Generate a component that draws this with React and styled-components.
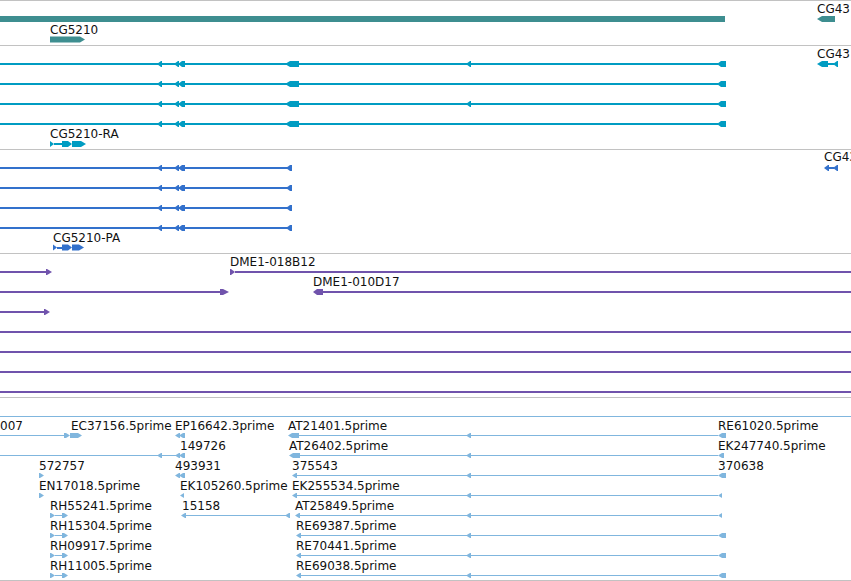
import React from 'react';
import styled, { createGlobalStyle } from 'styled-components';

const Global = createGlobalStyle`
  html, body { margin: 0; padding: 0; background: #ffffff; }
  body { font-family: "DejaVu Sans", "Liberation Sans", sans-serif; overflow: hidden; }
`;

const Browser = styled.main`
  width: 851px;
  height: 581px;
  display: flex;
  flex-direction: column;
  overflow: hidden;
  background: #ffffff;
`;

const Track = styled.section`
  flex: none;
  box-sizing: border-box;
  height: ${(p) => p.$height}px;
  border-top: 1px solid #c2c2c2;
  border-bottom: ${(p) => (p.$last ? '1px solid #c2c2c2' : 'none')};
  overflow: hidden;
  color: ${(p) => p.$color};
`;

const Canvas = styled.svg`
  display: block;
  width: 851px;
  height: 100%;
  overflow: hidden;
`;

const Stem = styled.rect`
  fill: currentColor;
  shape-rendering: crispEdges;
`;

const Exon = styled.polygon`
  fill: currentColor;
`;

const Label = styled.text`
  font-family: "DejaVu Sans", "Liberation Sans", sans-serif;
  font-size: 12px;
  fill: #111111;
`;

/* feature primitives */
const line = (x1, x2, y, t = 2) => ({ k: 'l', x1, x2, y, t });
const arrow = (x1, x2, y, dir = 'left', h = 6, head = 4) => ({ k: 'a', x1, x2, y, dir, h, head });
const text = (x, y, s) => ({ k: 't', x, y, s });

function Feature({ f }) {
  if (f.k === 'l') return <Stem x={f.x1} y={f.y - f.t / 2} width={f.x2 - f.x1} height={f.t} />;
  if (f.k === 't') return <Label x={f.x} y={f.y}>{f.s}</Label>;
  const top = f.y - f.h / 2;
  const bot = f.y + f.h / 2;
  const hd = Math.min(f.head, f.x2 - f.x1);
  const pts =
    f.dir === 'left'
      ? [[f.x1, f.y], [f.x1 + hd, top], [f.x2, top], [f.x2, bot], [f.x1 + hd, bot]]
      : [[f.x1, top], [f.x2 - hd, top], [f.x2, f.y], [f.x2 - hd, bot], [f.x1, bot]];
  return <Exon points={pts.map((p) => p.join(',')).join(' ')} />;
}

/* ---------- track contents (page coordinates) ---------- */
const geneTrack = [
  line(0, 725, 19, 6),
  text(50, 34, 'CG5210'),
  arrow(50, 85, 39.5, 'right', 6, 5),
  text(817, 13, 'CG43'),
  arrow(817, 835, 19, 'left', 6, 5),
];

const transcriptRow = (y, mid) => [
  line(0, 718, y),
  arrow(157, 162, y),
  arrow(174, 179, y),
  arrow(178, 185, y),
  arrow(285, 299, y, 'left', 6, 5),
  ...(mid ? [arrow(466, 471, y)] : []),
  arrow(717, 726, y),
];

const transcriptTrack = [
  ...transcriptRow(64, true),
  ...transcriptRow(84, false),
  ...transcriptRow(104, true),
  ...transcriptRow(124, false),
  text(50, 138, 'CG5210-RA'),
  arrow(50, 54, 144, 'right'),
  line(54, 62, 144),
  arrow(62, 72, 144, 'right'),
  arrow(72, 86, 144, 'right', 6, 5),
  text(817, 58, 'CG43'),
  arrow(817, 828, 64, 'left', 6, 5),
  line(828, 834, 64),
  arrow(833, 838, 64),
];

const proteinRow = (y) => [
  line(0, 288, y),
  arrow(157, 162, y),
  arrow(174, 179, y),
  arrow(178, 185, y),
  arrow(286, 292, y),
];

const proteinTrack = [
  ...proteinRow(168),
  ...proteinRow(188),
  ...proteinRow(208),
  ...proteinRow(228),
  text(53, 242, 'CG5210-PA'),
  arrow(53, 57, 247.5, 'right'),
  line(57, 62, 247.5),
  arrow(62, 72, 247.5, 'right'),
  arrow(72, 84, 247.5, 'right', 6, 5),
  text(824, 161, 'CG43'),
  arrow(824, 829, 168),
  line(829, 834, 168),
  arrow(833, 838, 168),
];

const cloneTrack = [
  line(0, 47, 272),
  arrow(46, 52, 272, 'right', 6, 5),
  text(230, 266, 'DME1-018B12'),
  arrow(230, 235, 272, 'right', 6, 4),
  line(235, 851, 272),
  line(0, 222, 292),
  arrow(220, 229, 292, 'right', 6, 6),
  text(313, 286, 'DME1-010D17'),
  arrow(313, 323, 292, 'left', 6, 4),
  line(323, 851, 292),
  line(0, 45, 312),
  arrow(44, 50, 312, 'right', 6, 5),
  line(0, 851, 332),
  line(0, 851, 352),
  line(0, 851, 372),
  line(0, 851, 392),
];

const E = 5; // EST glyph height
const rowY = (k) => 435.5 + 20 * (k - 1);
const estLine = (x1, x2, k) => ({ k: 'l', x1, x2, y: rowY(k), t: 1 });
const estArrow = (x1, x2, k, dir = 'left', head = 4) => arrow(x1, x2, rowY(k), dir, E, head);
const estLabel = (x, k, s) => text(x, 430 + 20 * (k - 1), s);

const longEst = (x, k, endW) => [
  estArrow(x, x + (k <= 2 ? 11 : 5), k),
  estLine(x + 4, 718, k),
  estArrow(466, 471, k),
  estArrow(718, 718 + endW, k),
];

const rhGlyph = (k) => [
  estArrow(50, 55, k, 'right'),
  estLine(55, 63, k),
  estArrow(62, 68, k, 'right'),
];

const estTrack = [
  { k: 'l', x1: 0, x2: 851, y: 416.5, t: 1 },
  // row 1
  estLabel(0, 1, '007'),
  estLine(0, 64, 1),
  estArrow(64, 70, 1, 'right'),
  estArrow(70, 82, 1, 'right'),
  estLabel(71, 1, 'EC37156.5prime'),
  estLabel(175, 1, 'EP16642.3prime'),
  estArrow(175, 180, 1),
  estArrow(179, 185, 1),
  estLabel(288, 1, 'AT21401.5prime'),
  ...longEst(288, 1, 8),
  estLabel(718, 1, 'RE61020.5prime'),
  // row 2
  estLine(0, 176, 2),
  estArrow(157, 162, 2),
  estArrow(175, 180, 2),
  estArrow(179, 185, 2),
  estLabel(180, 2, '149726'),
  estLabel(289, 2, 'AT26402.5prime'),
  ...longEst(289, 2, 6),
  estLabel(718, 2, 'EK247740.5prime'),
  // row 3
  estLabel(39, 3, '572757'),
  estArrow(39, 44, 3, 'right'),
  estLabel(175, 3, '493931'),
  estArrow(175, 180, 3),
  estArrow(179, 185, 3),
  estLabel(292, 3, '375543'),
  ...longEst(292, 3, 8),
  estLabel(718, 3, '370638'),
  // row 4
  estLabel(39, 4, 'EN17018.5prime'),
  estArrow(39, 44, 4, 'right'),
  estLabel(180, 4, 'EK105260.5prime'),
  estArrow(180, 184, 4),
  estLabel(292, 4, 'EK255534.5prime'),
  ...longEst(292, 4, 4),
  // row 5
  estLabel(50, 5, 'RH55241.5prime'),
  ...rhGlyph(5),
  estLabel(182, 5, '15158'),
  estArrow(181, 186, 5),
  estLine(185, 286, 5),
  estArrow(285, 290, 5),
  estLabel(295, 5, 'AT25849.5prime'),
  ...longEst(295, 5, 4),
  // rows 6-8
  estLabel(50, 6, 'RH15304.5prime'),
  ...rhGlyph(6),
  estLabel(296, 6, 'RE69387.5prime'),
  ...longEst(296, 6, 8),
  estLabel(50, 7, 'RH09917.5prime'),
  ...rhGlyph(7),
  estLabel(296, 7, 'RE70441.5prime'),
  ...longEst(296, 7, 8),
  estLabel(50, 8, 'RH11005.5prime'),
  ...rhGlyph(8),
  estLabel(296, 8, 'RE69038.5prime'),
  ...longEst(296, 8, 8),
];

const tracks = [
  { id: 'genes', top: 0, height: 45, color: '#3e8e90', features: geneTrack },
  { id: 'transcripts', top: 45, height: 104, color: '#009cc2', features: transcriptTrack },
  { id: 'proteins', top: 149, height: 104, color: '#3371cc', features: proteinTrack },
  { id: 'clones', top: 253, height: 144, color: '#7053ac', features: cloneTrack },
  { id: 'ests', top: 397, height: 184, color: '#80b6de', features: estTrack, last: true },
];

export default function App() {
  return (
    <>
      <Global />
      <Browser>
        {tracks.map((t) => {
          const inner = t.height - 1 - (t.last ? 1 : 0);
          return (
            <Track key={t.id} $height={t.height} $color={t.color} $last={t.last}>
              <Canvas viewBox={`0 ${t.top + 1} 851 ${inner}`} preserveAspectRatio="none">
                {t.features.map((f, i) => (
                  <Feature key={i} f={f} />
                ))}
              </Canvas>
            </Track>
          );
        })}
      </Browser>
    </>
  );
}
